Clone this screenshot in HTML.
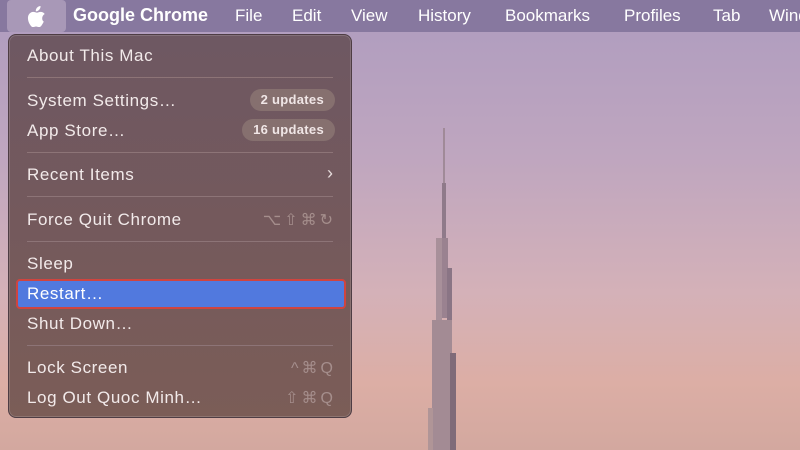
<!DOCTYPE html><html><head><style>
*{margin:0;padding:0;box-sizing:border-box}
body{width:800px;height:450px;overflow:hidden;position:relative;font-family:"Liberation Sans",sans-serif;
background:linear-gradient(180deg,#ae9cbf 0%,#bfa6bf 35%,#d4b1b8 65%,#dcaea5 85%,#d3a89f 100%);}
.bar{position:absolute;left:0;top:0;width:800px;height:32px;background:#87789f;color:#fff;font-size:17px}
.bar span{position:absolute;top:6px}
.apple{position:absolute;left:7px;top:0;width:59px;height:32px;background:#a898b7;border-radius:4px}
.menu{position:absolute;left:8px;top:34px;width:344px;height:384px;border-radius:8px;border:1px solid #4e3d44;
background:linear-gradient(180deg,#6e5862 0%,#74595c 50%,#7b5d57 100%);box-shadow:0 0 0 1px rgba(255,255,255,.15) inset}
.it{position:absolute;left:18px;color:#f2eaea;font-size:17px;letter-spacing:.6px}
.sep{position:absolute;left:18px;width:306px;height:1px;background:#8d7477}
.badge{position:absolute;right:16px;height:22px;border-radius:11px;background:#86706f;color:#f0e6e6;font-size:13px;font-weight:bold;padding:3px 11px;letter-spacing:.3px}
.sc{position:absolute;right:18px;color:#a58e8c;font-size:16px;letter-spacing:3px;margin-right:-3px}
.hl{position:absolute;left:7px;top:244px;width:330px;height:30px;background:#5179de;border:2px solid #d0443f;border-radius:4px}
</style></head><body>
<div class="bar"><div class="apple"></div>
<svg style="position:absolute;left:27px;top:5px" width="20" height="22" viewBox="0 0 20 22"><path fill="#fff" d="M13.5 1c.2 1.6-.5 3-1.5 4-.9.9-2.1 1.4-3.2 1.3-.2-1.4.5-2.9 1.4-3.8C11.2 1.6 12.5 1 13.5 1zM16.8 16.5c-.8 1.7-1.2 2.4-2.2 3.9-1.4 2-2.6 2.1-3.9 1.5-1.2-.5-2.1-.5-3.4 0-1.5.6-2.4.3-3.6-1.3C1.1 17.3.1 12.8 1.7 9.8c1-1.9 2.9-2.9 4.6-2.9 1.5 0 2.5.8 3.7.8 1.2 0 1.9-.8 3.7-.8 1.4 0 3 .7 4 2.1-3.5 1.9-2.9 6.9-.9 7.5z"/></svg>
<span style="left:73px;font-weight:bold;font-size:18px;top:5px">Google Chrome</span>
<span style="left:235px">File</span><span style="left:292px">Edit</span><span style="left:351px">View</span>
<span style="left:418px">History</span><span style="left:505px">Bookmarks</span><span style="left:624px">Profiles</span>
<span style="left:713px">Tab</span><span style="left:769px">Window</span></div>
<div class="menu">
<div class="it" style="top:11px">About This Mac</div>
<div class="sep" style="top:42px"></div>
<div class="it" style="top:56px">System Settings…</div><div class="badge" style="top:54px">2 updates</div>
<div class="it" style="top:86px">App Store…</div><div class="badge" style="top:84px">16 updates</div>
<div class="sep" style="top:117px"></div>
<div class="it" style="top:130px">Recent Items</div><div class="sc" style="top:128px;color:#e6dcdc;font-size:18px">›</div>
<div class="sep" style="top:161px"></div>
<div class="it" style="top:175px">Force Quit Chrome</div><div class="sc" style="top:175px">⌥⇧⌘↻</div>
<div class="sep" style="top:206px"></div>
<div class="it" style="top:219px">Sleep</div>
<div class="hl"></div>
<div class="it" style="top:249px;color:#fff">Restart…</div>
<div class="it" style="top:279px">Shut Down…</div>
<div class="sep" style="top:310px"></div>
<div class="it" style="top:323px">Lock Screen</div><div class="sc" style="top:323px">^⌘Q</div>
<div class="it" style="top:353px">Log Out Quoc Minh…</div><div class="sc" style="top:353px">⇧⌘Q</div>
</div>
<svg style="position:absolute;left:420px;top:128px" width="50" height="322" viewBox="0 0 50 322">
<rect x="23" y="0" width="2" height="60" fill="#a08a98"/>
<rect x="22" y="55" width="4" height="60" fill="#8f7a8a"/>
<rect x="21" y="110" width="7" height="80" fill="#9a8290"/>
<rect x="16" y="110" width="6" height="100" fill="#a8909a"/>
<rect x="27" y="140" width="5" height="90" fill="#8a7585"/>
<rect x="12" y="192" width="20" height="130" fill="#a38b94"/>
<rect x="30" y="225" width="6" height="97" fill="#7f6b79"/>
<rect x="8" y="280" width="5" height="42" fill="#b09597"/>
</svg>
</body></html>
